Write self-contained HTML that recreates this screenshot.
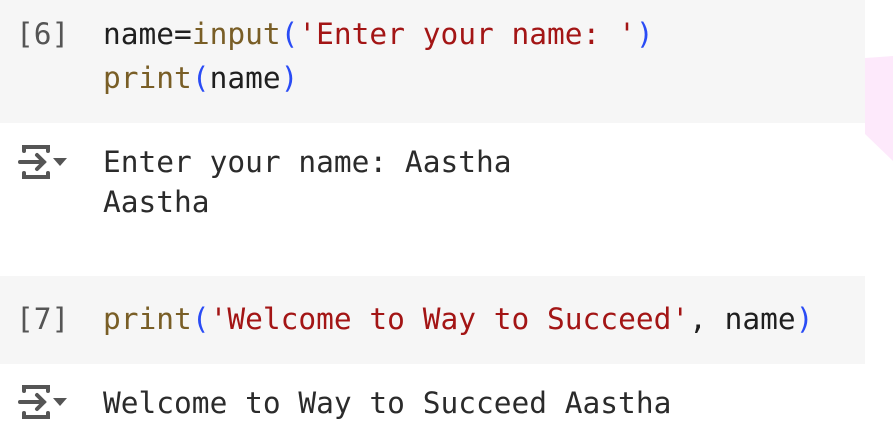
<!DOCTYPE html>
<html><head><style>
body{margin:0;width:893px;height:447px;background:#fff;position:relative;overflow:hidden;font-family:"DejaVu Sans Mono","Liberation Mono",monospace;}
.g{position:absolute;left:0;width:865px;background:#f6f6f6}
.t{position:absolute;font-size:29.5px;line-height:36px;white-space:pre;color:#1f1f1f}
.n{color:#555}
.f{color:#795e26}.p{color:#2a4cf5}.s{color:#a31515}
.o{color:#2b2b2b}
svg{position:absolute}
</style></head><body>
<div class="g" style="top:0;height:123px"></div>
<div class="g" style="top:276px;height:88px"></div>
<svg style="left:865px;top:56px" width="28" height="105"><polygon points="0,2 28,0 28,105 0,78" fill="#fde9fb"/></svg>
<div class="t n" style="left:16px;top:16px">[6]</div>
<div class="t" style="left:103px;top:16px">name=<span class="f">input</span><span class="p">(</span><span class="s">'Enter your name: '</span><span class="p">)</span></div>
<div class="t" style="left:103px;top:60px"><span class="f">print</span><span class="p">(</span>name<span class="p">)</span></div>
<div class="t o" style="left:103px;top:144px">Enter your name: Aastha</div>
<div class="t o" style="left:103px;top:184px">Aastha</div>
<div class="t n" style="left:16px;top:301px">[7]</div>
<div class="t" style="left:103px;top:301px"><span class="f">print</span><span class="p">(</span><span class="s">'Welcome to Way to Succeed'</span>, name<span class="p">)</span></div>
<div class="t o" style="left:103px;top:385px">Welcome to Way to Succeed Aastha</div>
<svg style="left:18px;top:142px" width="52" height="42" viewBox="0 0 52 42"><g fill="none" stroke="#555" stroke-width="4" stroke-linecap="round"><path d="M6 9V5h24v4M6 31v4h24v-4M2 20h24M19 13l7 7-7 7"/></g><path d="M35 16h14l-7 8z" fill="#555"/></svg>
<svg style="left:18px;top:382px" width="52" height="42" viewBox="0 0 52 42"><g fill="none" stroke="#555" stroke-width="4" stroke-linecap="round"><path d="M6 9V5h24v4M6 31v4h24v-4M2 20h24M19 13l7 7-7 7"/></g><path d="M35 16h14l-7 8z" fill="#555"/></svg>
</body></html>
